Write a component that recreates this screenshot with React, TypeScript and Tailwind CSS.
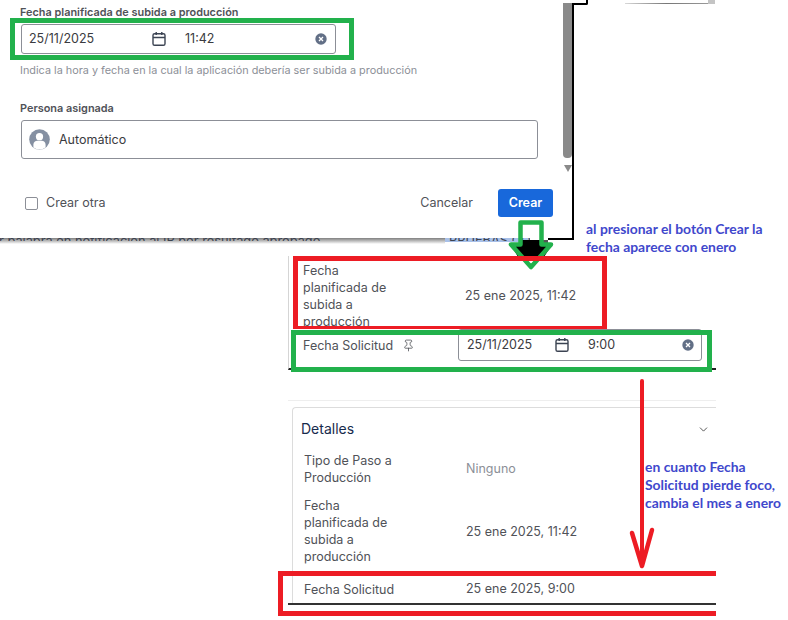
import { Pin, ChevronDown } from "lucide-react";

function CalendarIcon() {
  return (
    <svg width="16" height="16" viewBox="0 0 16 16" fill="none" stroke="#3b4352" strokeWidth="1.4">
      <rect x="2" y="2.7" width="12" height="11.6" rx="1.6" />
      <path d="M2 6.5h12M5.2 1v3M10.8 1v3" />
    </svg>
  );
}

function ClearIcon() {
  return (
    <svg width="12" height="12" viewBox="0 0 12 12">
      <circle cx="6" cy="6" r="5.7" fill="#626f86" />
      <path d="M4 4l4 4M8 4l-4 4" stroke="#fff" strokeWidth="1.3" />
    </svg>
  );
}

function Avatar() {
  return (
    <svg width="21" height="21" viewBox="0 0 22 22">
      <circle cx="11" cy="11" r="10.8" fill="#8590a2" />
      <circle cx="11" cy="8" r="3.8" fill="#fff" />
      <path d="M4.6 19v-2.6c0-2.6 2-4 4.2-4h4.4c2.2 0 4.2 1.4 4.2 4V19c-1.8 1.6-4 2.4-6.4 2.4S6.400 20.600 4.600 19z" fill="#fff" />
    </svg>
  );
}

function DateField({ time, className, gapA, gapB }: { time: string; className: string; gapA: string; gapB: string }) {
  return (
    <div className={`flex items-center border border-[#8c8f97] rounded-[3px] bg-white text-[12.500px] text-[#3a3b40] ${className}`}>
      <span className={gapA}>25/11/2025</span>
      <CalendarIcon />
      <span className={gapB}>{time}</span>
      <ClearIcon />
    </div>
  );
}

function DetailRow({ label, value, muted, className, valueClass }: { label: React.ReactNode; value: string; muted?: boolean; className?: string; valueClass?: string }) {
  return (
    <div className={`flex items-center ${className ?? ""}`}>
      <div className="w-[162px] pr-2 leading-[17px] text-[#505258]">{label}</div>
      <div className={`${muted ? "text-[#8c8f97]" : "text-[#505258]"} ${valueClass ?? ""}`}>{value}</div>
    </div>
  );
}

function Modal() {
  return (
    <div className="relative shrink-0 w-[574px] h-[238px] bg-white">
      <div className="pl-[20px] pt-[5px] w-[562px]">
        <div className="text-[10.900px] leading-[14px] font-semibold text-[#505258]">Fecha planificada de subida a producción</div>
        <DateField
          time="11:42"
          className="mt-[5px] ml-px w-[315px] h-[30px] pl-[7px]"
          gapA="w-[122px]"
          gapB="w-[148px] pl-[18px]"
        />
        <div className="mt-[9px] text-[10.850px] leading-[14px] text-[#8c8f97]">Indica la hora y fecha en la cual la aplicación debería ser subida a producción</div>
        <div className="mt-[24px] text-[10.900px] leading-[14px] font-semibold text-[#505258]">Persona asignada</div>
        <div className="mt-[5px] ml-px w-[517px] h-[39px] flex items-center gap-[9px] pl-[7px] border border-[#8c8f97] rounded-[3px] text-[12.500px] text-[#3a3b40]">
          <Avatar />
          <span className="mt-px">Automático</span>
        </div>
      </div>
      <div className="mt-[30px] ml-[25px] w-[528px] flex items-center h-[28px] text-[12.500px]">
        <span className="w-[13px] h-[13px] border border-[#8c8f97] rounded-[2px]" />
        <span className="ml-[8px] text-[#505258]">Crear otra</span>
        <span className="ml-auto text-[#505258]">Cancelar</span>
        <button className="ml-[25px] w-[55px] h-[28px] bg-[#1868db] rounded-[3px] text-white font-semibold text-[12.500px]">Crear</button>
      </div>
      <div className="absolute right-[2px] top-[3px] w-[9px] h-[155px] bg-[#8a8a8a] rounded-b-[4px]" />
      <div className="absolute right-[2px] top-[165px] w-0 h-0 border-x-[4.500px] border-x-transparent border-t-[7px] border-t-[#8a8a8a]" />
      <div className="absolute right-0 top-[3px] bottom-0 w-[2px] bg-black" />
    </div>
  );
}

function TopFragments() {
  return (
    <div className="flex items-start">
      <div className="w-[14px] h-[5px] border-b-2 border-r-2 border-black rounded-br-[2px]" />
      <div className="ml-[37px] mt-[3px] w-[83px] h-px bg-linear-to-r from-[#d8d8d8] via-[#777] to-[#999]" />
      <div className="w-[7px] h-[4px] bg-[#c4c4c4]" />
    </div>
  );
}

function BehindStrip() {
  return (
    <div className="flex items-start h-[6px] whitespace-nowrap text-[12.800px] leading-[14px] text-[#3d4350]">
      <div className="w-[445px] h-[6px] overflow-hidden bg-linear-to-b from-[#808080] to-white">
        <div className="h-[3px] overflow-hidden">
          <div className="-mt-[4px] -ml-px">r palabra en notificación al IR por resultado aprobado</div>
        </div>
      </div>
      <div className="w-[85px] h-[4px] overflow-hidden bg-[#a8c0e8]">
        <div className="h-[3px] overflow-hidden">
          <div className="-mt-[4px] ml-[4px]">PRUEBAS CON IA</div>
        </div>
      </div>
      <div className="w-[18px] h-[4px] mt-[2px] bg-[#555]" />
      <div className="w-[26px] h-[2px] bg-black" />
    </div>
  );
}

function FieldsPanel() {
  return (
    <div className="h-[114px] bg-white border-l border-[#d5d5d5] border-b-2 border-b-[#222]">
      <DetailRow
        label={<>Fecha<br />planificada de<br />subida a<br />producción</>}
        value="25 ene 2025, 11:42"
        className="pl-[14px] pt-[6px] h-[74px]"
        valueClass="mt-px"
      />
      <div className="flex items-start pl-[14px]">
        <div className="flex items-center w-[155px] h-[31px] text-[#505258] gap-[9px]">
          <span className="mt-px">Fecha Solicitud</span>
          <Pin size={13} strokeWidth={1.5} className="text-[#505258] -mt-px" />
        </div>
        <DateField time="9:00" className="-mt-px w-[244px] h-[32px] pl-[8px]" gapA="w-[87px]" gapB="w-[112px] pl-[18px]" />
      </div>
    </div>
  );
}

function DetailsPanel() {
  return (
    <div className="mt-[30px] h-[205px] overflow-hidden border-t border-[#eeeeee] border-b-2 border-b-[#333]">
      <div className="ml-[4px] mt-[6px] h-[210px] border-l border-t border-[#dcdcdc] rounded-tl-[4px]">
        <div className="flex items-center justify-between h-[40px] pl-[8px] pr-[6px] text-[14px] text-[#172b4d]">
          <span>Detalles</span>
          <ChevronDown size={13} strokeWidth={1.5} className="text-[#333] mt-[2px]" />
        </div>
        <div className="flex flex-col pl-[11px]">
          <DetailRow label={<>Tipo de Paso a<br />Producción</>} value="Ninguno" muted className="mt-[3px] h-[36px]" />
          <DetailRow label={<>Fecha<br />planificada de<br />subida a<br />producción</>} value="25 ene 2025, 11:42" className="mt-[9px] h-[69px]" valueClass="mt-[4px]" />
          <DetailRow label="Fecha Solicitud" value="25 ene 2025, 9:00" className="mt-[15px] h-[18px]" />
        </div>
      </div>
    </div>
  );
}

function Note({ className, lines }: { className: string; lines: string[] }) {
  return (
    <div className={`absolute font-['Lato',sans-serif] font-bold text-[13.900px] leading-[18px] text-[#3f48cc] whitespace-nowrap ${className}`}>
      {lines.map((l) => (
        <div key={l}>{l}</div>
      ))}
    </div>
  );
}

function Annotations() {
  return (
    <>
      <div className="absolute left-[10px] top-[18px] w-[344px] h-[42px] border-[5px] border-[#22b14c]" />
      <svg className="absolute left-0 top-0" width="788" height="620" viewBox="0 0 788 620" fill="none">
        <path d="M522 240h20v3h11l-9 14h-26l-8-14h12z" fill="#000" />
        <path d="M520.500 222.500H541.500V244.500H551L531 267L511 244.500H520.500Z" stroke="#22b14c" strokeWidth="4.500" strokeLinejoin="round" />
        <path d="M642 381V565" stroke="#ed1c24" strokeWidth="4" strokeLinecap="round" />
        <path d="M632 533L642 566L652 530" stroke="#ed1c24" strokeWidth="4.500" strokeLinecap="round" strokeLinejoin="round" />
      </svg>
      <div className="absolute left-[293px] top-[256px] w-[314px] h-[73px] border-[5px] border-b-[3px] border-[#ed1c24]" />
      <div className="absolute left-[291px] top-[330px] w-[421px] h-[42px] border-[5px] border-[#22b14c]" />
      <div className="absolute left-[278px] top-[571px] w-[438px] h-[45px] border-[5px] border-r-0 border-[#ed1c24]" />
      <Note className="left-[586px] top-[220px]" lines={["al presionar el botón Crear la", "fecha aparece con enero"]} />
      <Note className="left-[645px] top-[458px]" lines={["en cuanto Fecha", "Solicitud pierde foco,", "cambia el mes a enero"]} />
    </>
  );
}

export default function App() {
  return (
    <div className="relative w-[788px] h-[620px] overflow-hidden bg-white font-['Inter',sans-serif]">
      <div className="flex h-[238px]">
        <Modal />
        <TopFragments />
      </div>
      <BehindStrip />
      <div className="ml-[288px] mt-[12px] w-[428px] flex flex-col text-[12.500px]">
        <FieldsPanel />
        <DetailsPanel />
      </div>
      <Annotations />
    </div>
  );
}
